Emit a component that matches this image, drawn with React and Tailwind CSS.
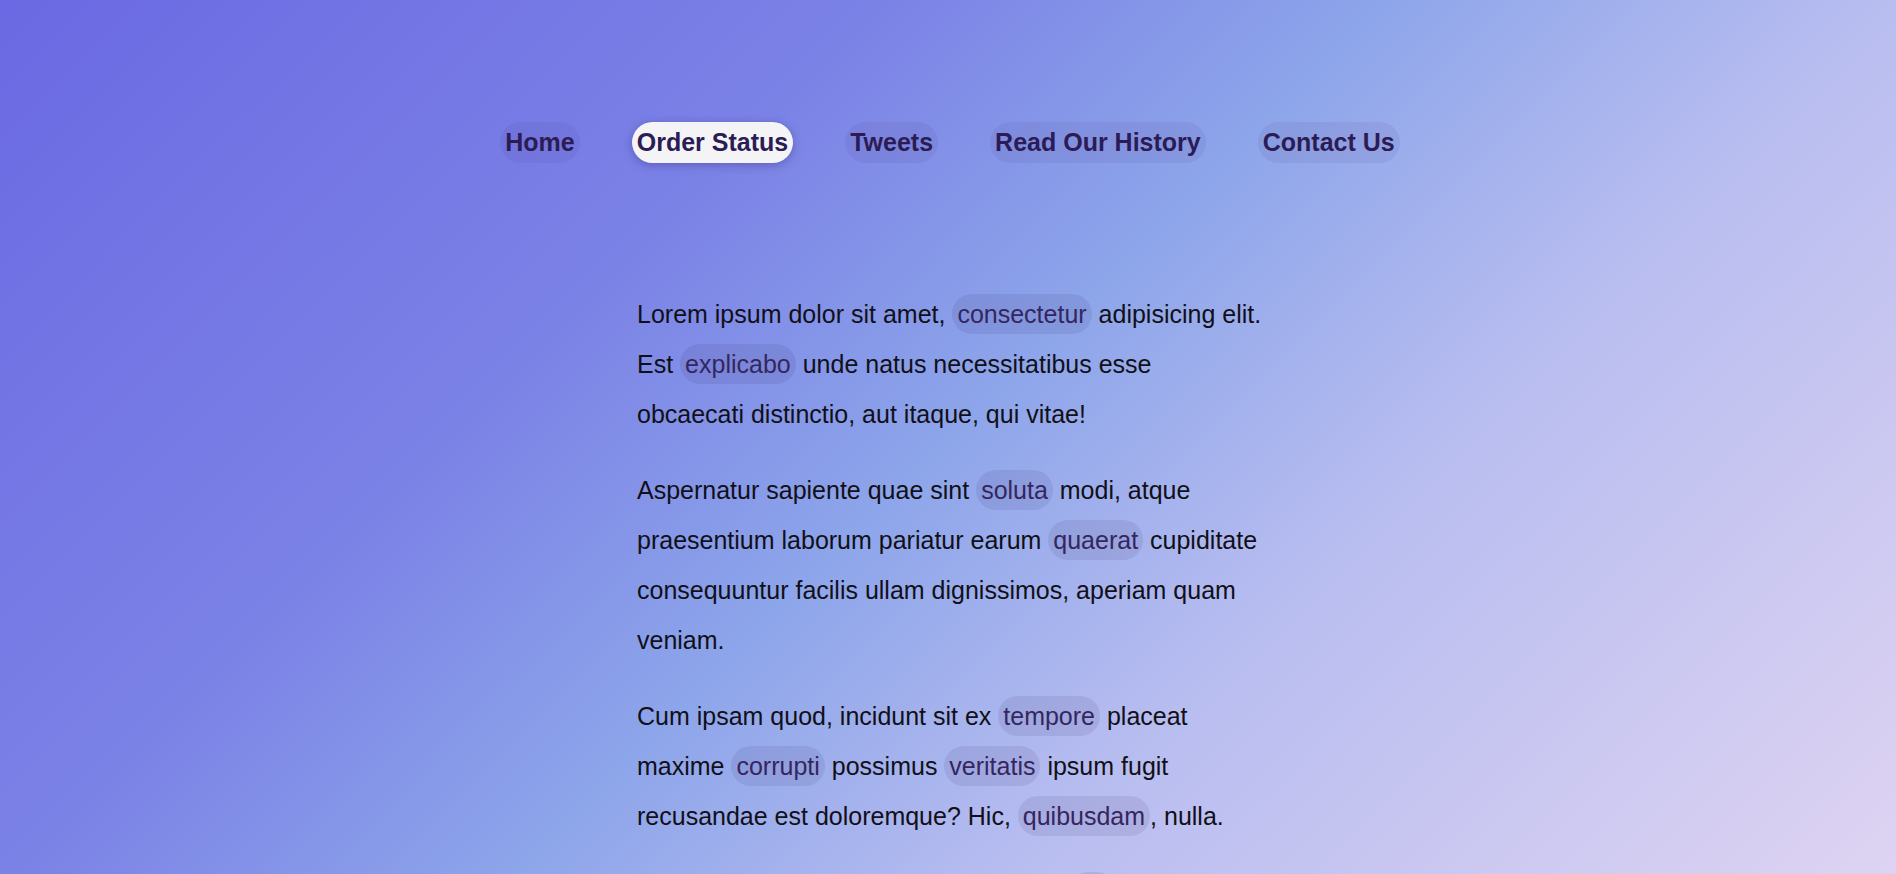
import React from 'react';

const navItems = [
    { title: 'Home' },
    { title: 'Order Status', active: true },
    { title: 'Tweets' },
    { title: 'Read Our History' },
    { title: 'Contact Us' },
];

// paragraphs: plain strings and { chip } pieces
const paragraphs = [
    ['Lorem ipsum dolor sit amet, ', { chip: 'consectetur' }, ' adipisicing elit. Est ', { chip: 'explicabo' }, ' unde natus necessitatibus esse obcaecati distinctio, aut itaque, qui vitae!'],
    ['Aspernatur sapiente quae sint ', { chip: 'soluta' }, ' modi, atque praesentium laborum pariatur earum ', { chip: 'quaerat' }, ' cupiditate consequuntur facilis ullam dignissimos, aperiam quam veniam.'],
    ['Cum ipsam quod, incidunt sit ex ', { chip: 'tempore' }, ' placeat maxime ', { chip: 'corrupti' }, ' possimus ', { chip: 'veritatis' }, ' ipsum fugit recusandae est doloremque? Hic, ', { chip: 'quibusdam' }, ', nulla.'],
    ['Dolorum totam voluptates aut sint nisi, ', { chip: 'iste' }, ' quidem ratione eaque magni dolores sequi, ', { chip: 'deleniti' }, ' ad numquam.'],
];

const Chip = ({ children }) => (
    <span className="rounded-full bg-[rgba(50,40,100,0.1)] px-[5px] py-[6px] text-[#34275f]">{children}</span>
);

export default function App() {
    return (
        <div className="min-h-screen bg-fixed bg-[linear-gradient(135deg,#6b69e3_0%,#7b82e6_32%,#8da5ea_50%,#b8bdf0_68%,#ded3f2_100%)] font-['Liberation_Sans',Arial,sans-serif]">
            <nav className="flex justify-center gap-[52px] pl-[4px] pt-[122px]">
                {navItems.map((item) => (
                    <a
                        key={item.title}
                        href="#"
                        className={`flex h-[41px] items-center rounded-full px-[5px] text-[25px] font-bold text-[#2b1c55] ${
                            item.active
                                ? 'bg-[#f4f4f6] shadow-[0_2px_10px_rgba(40,30,110,0.35)]'
                                : 'bg-[rgba(60,40,120,0.08)]'
                        }`}
                    >
                        {item.title}
                    </a>
                ))}
            </nav>

            <main className="mx-auto w-[630px] pl-[4px] pt-[126px] pb-24 text-[25px] leading-[50px] text-[#111018]">
                {paragraphs.map((parts, i) => (
                    <p key={i} className="mb-[26px]">
                        {parts.map((part, j) =>
                            typeof part === 'string' ? <span key={j}>{part}</span> : <Chip key={j}>{part.chip}</Chip>
                        )}
                    </p>
                ))}
            </main>
        </div>
    );
}
